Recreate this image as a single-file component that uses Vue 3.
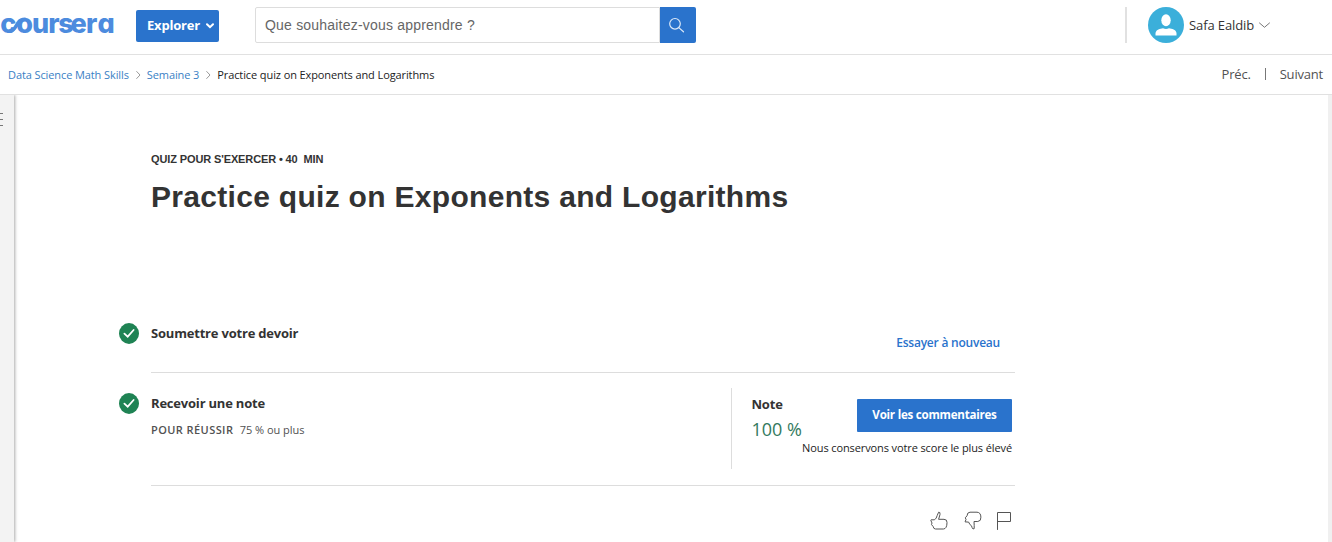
<script setup>
const crumbs = ['Data Science Math Skills', 'Semaine 3']
</script>

<template>
  <div class="page">
    <header class="top">
      <svg class="logo" width="118" height="34" viewBox="0 0 118 34" role="img" aria-label="coursera">
        <text y="23" x="0.2 16.2 32 48.2 58.2 70.6 86 97.6">coursera</text>
        <path d="M9.5 21.3C14 21.8 16 15.5 18.6 12C20 10 22 9.2 25 9.2" />
      </svg>
      <button class="explore">
        <span>Explorer</span>
        <svg width="8" height="6" viewBox="0 0 8 6"><path d="M1 1.2L4 4.2L7 1.2" /></svg>
      </button>
      <div class="search">
        <div class="field">Que souhaitez-vous apprendre ?</div>
        <div class="go">
          <svg width="17" height="17" viewBox="0 0 17 17"><circle cx="7" cy="6.8" r="5.3" /><path d="M10.8 10.6L15.5 14.8" /></svg>
        </div>
      </div>
      <div class="user">
        <svg class="avatar" width="36" height="36" viewBox="0 0 36 36">
          <circle cx="18" cy="18" r="18" />
          <ellipse cx="18" cy="13.2" rx="4.7" ry="6" />
          <path d="M7.5 28.5V26Q8 23 11.5 22L15 21.3Q18 22.6 21 21.3L24.5 22Q28 23 28.5 26V28.5Z" />
        </svg>
        <span class="name">Safa Ealdib</span>
        <svg class="chev" width="11" height="7" viewBox="0 0 11 7"><path d="M.5 1L5.5 5.3L10.5 1" /></svg>
      </div>
    </header>
    <nav class="sub">
      <template v-for="c in crumbs" :key="c">
        <a>{{ c }}</a>
        <svg width="5" height="8" viewBox="0 0 5 8"><path d="M.7 .5L4 4L.7 7.5" /></svg>
      </template>
      <span class="current">Practice quiz on Exponents and Logarithms</span>
      <div class="pager"><span class="prev">Préc.</span><i></i><span class="next">Suivant</span></div>
    </nav>
    <div class="body">
      <aside><i></i><i></i><i></i></aside>
      <main>
        <div class="kind">QUIZ POUR S'EXERCER • 40&nbsp; MIN</div>
        <h1>Practice quiz on Exponents and Logarithms</h1>
        <section class="row first">
          <svg class="tick" width="20" height="21" viewBox="0 0 20 21"><ellipse cx="10" cy="10.5" rx="10" ry="10.4" /><path d="M5.4 10.7L8.7 13.7L14.6 7" /></svg>
          <h2 class="submit">Soumettre votre devoir</h2>
          <a class="retry">Essayer à nouveau</a>
        </section>
        <section class="row second">
          <svg class="tick" width="20" height="21" viewBox="0 0 20 21"><ellipse cx="10" cy="10.5" rx="10" ry="10.4" /><path d="M5.4 10.7L8.7 13.7L14.6 7" /></svg>
          <div class="result">
            <h2 class="receive">Recevoir une note</h2>
            <p><span class="pass">POUR RÉUSSIR</span><span class="plus">75 % ou plus</span></p>
          </div>
          <div class="grade">
            <div class="line">
              <div>
                <div class="note">Note</div>
                <div class="score">100 %</div>
              </div>
              <button class="view"><span>Voir les commentaires</span></button>
            </div>
            <div class="keep"><span>Nous conservons votre score le plus élevé</span></div>
          </div>
        </section>
        <div class="feedback">
          <svg width="18" height="19" viewBox="0 0 18 19"><path d="M1.5 8.8H4.5Q6.5 7.5 7.2 4.5L8.6 1.2Q10.4 .8 10 3.5L8.6 8.3H14Q17.3 8.4 17 11.5Q17 17.8 13.4 18H5.5Q3.5 18 3.2 15.6L1.5 13.6L2 12L1 9.8Z" /></svg>
          <svg width="18" height="19" viewBox="0 0 18 19"><path d="M1.2 10.5L2 8.5L1.3 6.8L3 4.8Q3.2 1.2 6 1.2H13Q16.8 1.4 16.9 6.2Q17.2 10.2 13.8 10.5H10L10.2 14.5V17.6Q8.8 18.7 8.2 16.8L7.5 14.8Q5.5 13.8 4.8 11.5Z" /></svg>
          <svg class="flag" width="14" height="19" viewBox="0 0 14 19"><path d="M.5 18.5V1.5H13.5V10.5H.5" /></svg>
        </div>
      </main>
      <div class="rail"></div>
    </div>
  </div>
</template>

<style>
body { margin: 0; overflow: hidden; }
</style>

<style scoped>
* { box-sizing: border-box; }
.page { width: 1332px; height: 542px; background: #fff; color: #333; font-family: "Open Sans", sans-serif; display: flex; flex-direction: column; overflow: hidden; white-space: nowrap; }
svg { display: block; flex: none; }
path { fill: none; stroke-linecap: round; }
button { border: 0; padding: 0; background: #2a73cc; color: #fff; font: 700 13px "Open Sans", sans-serif; display: flex; align-items: center; }
h1, h2, p { margin: 0; }
.top { height: 55px; border-bottom: 1px solid #e1e1e1; display: flex; align-items: flex-start; flex: none; }
.logo { margin-top: 10px; width: 118px; overflow: visible; }
.logo text { font: 800 27px Inter, sans-serif; font-feature-settings: "cv11"; fill: #4c8bde; }
.logo path { stroke: #4c8bde; stroke-width: 3.6; }
.explore { margin: 10px 0 0 18px; width: 83px; height: 32px; border-radius: 2px; padding-left: 11px; gap: 6px; }
.explore span { letter-spacing: -.2px; margin-top: -2px; }
.explore path { stroke: #fff; stroke-width: 2; }
.search { display: flex; margin: 7px 0 0 36px; }
.field { width: 405px; height: 36px; border: 1px solid #ddd; border-radius: 2px 0 0 2px; padding-left: 9px; font: 14px/35px "Liberation Sans", Arial, sans-serif; color: #666; letter-spacing: .2px; }
.go { width: 36px; height: 36px; background: #2a73cc; border-radius: 0 2px 2px 0; padding: 10px 0 0 8px; }
.go circle, .go path { fill: none; stroke: #dce9f8; stroke-width: 1.2; }
.user { margin: 7px 0 0 auto; width: 207px; height: 36px; border-left: 2px solid #e1e1e1; padding-left: 21px; display: flex; align-items: center; }
.avatar circle { fill: #3bafda; }
.avatar ellipse, .avatar path { fill: #fff; }
.name { font-size: 13px; margin-left: 5px; letter-spacing: -.1px; }
.chev { margin: 1px 0 0 5px; }
.chev path { stroke: #777; }
.sub { height: 40px; border-bottom: 1px solid #e1e1e1; display: flex; align-items: center; padding: 0 9px 0 8px; flex: none; font-size: 11px; letter-spacing: -.1px; }
.sub a { color: #3a7fc5; }
.sub svg { margin: 1px 6px 0 7px; }
.sub svg path { stroke: #999; }
.current { color: #222; }
.pager { margin-left: auto; display: flex; align-items: center; font-size: 13px; letter-spacing: -.2px; color: #525252; margin-top: -2px; }
.pager i { width: 1px; height: 12px; background: #777; margin: 1px 14px 0; }
.body { flex: 1; display: flex; min-height: 0; }
aside { width: 14px; background: #f3f3f3; box-shadow: 1px 0 3px #aaa; clip-path: inset(0 -6px 0 0); padding-top: 18px; flex: none; }
aside i { display: block; width: 3px; height: 1px; background: #777; margin-bottom: 5px; }
main { width: 896px; margin-left: 105px; padding-top: 56px; }
.kind { margin-left: 32px; font: 700 11px/16px "Liberation Sans", Arial, sans-serif; letter-spacing: -.12px; }
h1 { margin: 11px 0 0 32px; font: 700 30px/38px "Liberation Sans", Arial, sans-serif; letter-spacing: .3px; }
h2 { font-size: 13px; line-height: 18px; font-weight: 700; letter-spacing: -.2px; }
.row { display: flex; align-items: flex-start; position: relative; }
.row::after { content: ""; position: absolute; left: 32px; right: 0; bottom: 0; height: 1px; background: #ddd; }
.tick { margin-right: 12px; }
.tick ellipse { fill: #1f8354; }
.tick path { stroke: #fff; stroke-width: 1.8; }
.first { margin-top: 107px; height: 50px; }
.first h2 { margin-top: 1px; }
.retry { margin: 11px 15px 0 auto; font-size: 12px; line-height: 18px; font-weight: 600; letter-spacing: -.22px; color: #2a73cc; }
.second { height: 113px; padding-top: 15px; }
.second .tick { margin-top: 5px; }
.result { padding-top: 6px; }
.result p { margin-top: 9px; font-size: 11px; line-height: 17px; display: flex; gap: 6.5px; color: #525252; }
.pass { font-weight: 600; letter-spacing: .42px; }
.plus { letter-spacing: -.05px; }
.grade { margin-left: auto; width: 284px; height: 81px; border-left: 1px solid #ddd; padding: 7px 3px 0 19.5px; }
.line { display: flex; justify-content: space-between; height: 45px; }
.note { font-size: 13px; line-height: 18px; font-weight: 700; letter-spacing: -.2px; }
.score { font-size: 18px; line-height: 24px; margin-top: 4px; color: #337a5e; }
.view { width: 155px; height: 33px; margin-top: 4px; border-radius: 1px; justify-content: center; font-size: 11.6px; letter-spacing: -.25px; padding-bottom: 2px; }
.keep { font-size: 11px; line-height: 16px; display: flex; justify-content: flex-end; letter-spacing: -.11px; color: #222; }
.feedback { display: flex; margin: 25px 0 0 811px; gap: 16px; }
.feedback path { stroke: #555; stroke-width: 1; }
.feedback .flag { margin-left: -1px; }
.rail { margin-left: auto; width: 4px; background: #f0f0f0; }
</style>
